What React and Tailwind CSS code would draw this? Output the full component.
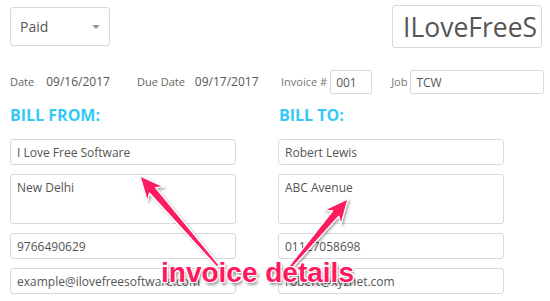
import React from "react";

const field =
  "block w-full h-[26px] rounded-[3px] border border-[#d6dadf] bg-white px-[6px] text-[12px] text-[#555] outline-none";

function arrowPoints(tail, tip, headLen = 24, headHalf = 11, neck = 4, end = 1.5) {
  const dx = tip[0] - tail[0];
  const dy = tip[1] - tail[1];
  const len = Math.hypot(dx, dy);
  const ux = dx / len;
  const uy = dy / len;
  const nx = -uy;
  const ny = ux;
  const bx = tip[0] - ux * headLen;
  const by = tip[1] - uy * headLen;
  const bx2 = tip[0] - ux * (headLen - 5);
  const by2 = tip[1] - uy * (headLen - 5);
  const pts = [
    [tail[0] + nx * end, tail[1] + ny * end],
    [bx2 + nx * neck, by2 + ny * neck],
    [bx + nx * headHalf, by + ny * headHalf],
    tip,
    [bx - nx * headHalf, by - ny * headHalf],
    [bx2 - nx * neck, by2 - ny * neck],
    [tail[0] - nx * end, tail[1] - ny * end],
  ];
  return pts.map((p) => p.map((v) => v.toFixed(1)).join(",")).join(" ");
}

function Column({ name, address, phone, email }) {
  return (
    <div className="flex w-[226px] flex-col gap-[9px]">
      <input readOnly defaultValue={name} className={field} />
      <textarea
        readOnly
        defaultValue={address}
        className="block h-[50px] w-full resize-none rounded-[3px] border border-[#d6dadf] bg-white px-[6px] pt-[4px] text-[12px] text-[#555] outline-none"
      />
      <input readOnly defaultValue={phone} className={field} />
      <input readOnly defaultValue={email} className={field} />
    </div>
  );
}

export default function App() {
  return (
    <div className="relative h-[301px] w-[550px] overflow-hidden bg-white font-['Open_Sans',sans-serif] text-[#555]">
      <div className="flex items-start justify-between pl-[10px] pr-[8px]">
        <div className="mt-[7px] flex h-[39px] w-[100px] items-center justify-between rounded-[3px] border border-[#d6dadf] pl-[9px] pr-[9px] text-[14px] text-[#555]">
          <span>Paid</span>
          <span className="h-0 w-0 border-x-[4px] border-t-[4px] border-x-transparent border-t-[#999]" />
        </div>
        <input
          readOnly
          defaultValue="ILoveFreeSoftware"
          className="mt-[5px] h-[43px] w-[150px] rounded-[3px] border border-[#d6dadf] pl-[10px] pr-[4px] text-[26.5px] text-[#555] outline-none"
        />
      </div>

      <div className="mt-[22px] flex h-[24px] items-center whitespace-nowrap">
        <div className="flex w-[281px] shrink-0 items-center">
          <span className="ml-[10px] text-[11px] text-[#666]">Date</span>
          <span className="ml-[12px] text-[12px] text-[#555]">09/16/2017</span>
          <span className="ml-[27px] text-[11px] text-[#666]">Due Date</span>
          <span className="ml-[10px] text-[12px] text-[#555]">09/17/2017</span>
        </div>
        <span className="shrink-0 text-[11px] text-[#777]">Invoice #</span>
        <input
          readOnly
          defaultValue="001"
          className="ml-[3px] h-[24px] w-[42px] shrink-0 rounded-[2px] border border-[#d6dadf] px-[5px] text-[12px] text-[#555] outline-none"
        />
        <span className="ml-[19px] shrink-0 text-[11px] text-[#777]">Job</span>
        <input
          readOnly
          defaultValue="TCW"
          className="ml-[3px] h-[24px] w-[134px] shrink-0 rounded-[2px] border border-[#d6dadf] px-[5px] text-[12px] text-[#555] outline-none"
        />
      </div>

      <div className="mt-[13px] flex gap-[42px] pl-[10px]">
        <div className="flex flex-col">
          <h2 className="text-[16px] font-bold leading-[16px] text-[#33c9f7]">BILL FROM:</h2>
          <div className="mt-[16px]">
            <Column
              name="I Love Free Software"
              address="New Delhi"
              phone="9766490629"
              email="example@ilovefreesoftware.com"
            />
          </div>
        </div>
        <div className="flex flex-col">
          <h2 className="ml-[1px] text-[16px] font-bold leading-[16px] text-[#33c9f7]">BILL TO:</h2>
          <div className="mt-[16px]">
            <Column
              name="Robert Lewis"
              address="ABC Avenue"
              phone="01127058698"
              email="robert@xyznet.com"
            />
          </div>
        </div>
      </div>

      <svg className="pointer-events-none absolute inset-0" width="550" height="301">
        <defs>
          <filter id="sh" x="-20%" y="-20%" width="140%" height="140%">
            <feDropShadow dx="1.5" dy="1.5" stdDeviation="1.2" floodColor="#000" floodOpacity="0.35" />
          </filter>
        </defs>
        <polygon
          points={arrowPoints([218, 266], [140, 176])}
          fill="#fe1a60"
          stroke="#fff"
          strokeWidth="1.2"
          strokeLinejoin="round"
          filter="url(#sh)"
        />
        <polygon
          points={arrowPoints([288, 270], [348, 199])}
          fill="#fe1a60"
          stroke="#fff"
          strokeWidth="1.2"
          strokeLinejoin="round"
          filter="url(#sh)"
        />
      </svg>

      <div className="absolute left-[161px] top-[257px] font-['Liberation_Sans',Arial,sans-serif] text-[28px] font-bold leading-[32px] text-[#fe1a60] [text-shadow:-1px_-1px_0_#fff,1px_-1px_0_#fff,-1px_1px_0_#fff,1px_1px_0_#fff,0_-1px_0_#fff,0_1px_0_#fff,2px_3px_3px_rgba(0,0,0,0.45)]">
        invoice details
      </div>
    </div>
  );
}
